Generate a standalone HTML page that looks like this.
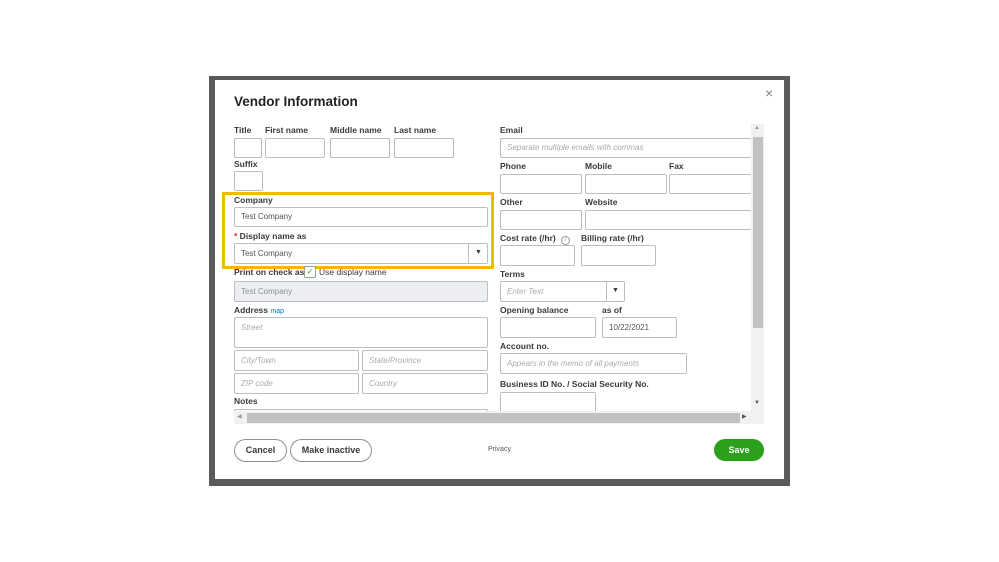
<!DOCTYPE html>
<html><head><meta charset="utf-8"><style>
*{box-sizing:border-box;margin:0;padding:0}
body{width:999px;height:562px;background:#fff;position:relative;overflow:hidden;font-family:"Liberation Sans",sans-serif;color:#393a3d}
.a{position:absolute}
.frame{left:209px;top:76px;width:581px;height:410px;background:#5a5a5a}
.dlg{left:215px;top:80px;width:569px;height:399px;background:#fff}
.l{position:absolute;font-size:8.5px;font-weight:bold;color:#393a3d;white-space:nowrap}
.i{position:absolute;border:1px solid #babec5;border-radius:2px;background:#fff;font-size:8px;color:#555;padding-left:6px;white-space:nowrap;overflow:hidden}
.ph{color:#aaa;font-style:italic}
.btn{position:absolute;border:1px solid #8d9096;border-radius:12px;font-size:9px;font-weight:bold;text-align:center;line-height:21px;background:#fff;color:#393a3d}
</style></head><body>
<div class="a frame"></div>
<div class="a dlg"></div>
<div class="a" style="left:234px;top:94px;font-size:13.5px;font-weight:bold;color:#222">Vendor Information</div>
<div class="a" style="left:765px;top:85px;font-size:14px;color:#888">×</div>

<div class="l" style="left:234px;top:125px">Title</div>
<div class="l" style="left:265px;top:125px">First name</div>
<div class="l" style="left:330px;top:125px">Middle name</div>
<div class="l" style="left:394px;top:125px">Last name</div>
<div class="i" style="left:234px;top:138px;width:28px;height:20px"></div>
<div class="i" style="left:265px;top:138px;width:60px;height:20px"></div>
<div class="i" style="left:330px;top:138px;width:60px;height:20px"></div>
<div class="i" style="left:394px;top:138px;width:60px;height:20px"></div>
<div class="l" style="left:234px;top:159px">Suffix</div>
<div class="i" style="left:234px;top:171px;width:29px;height:20px"></div>

<div class="a" style="left:222px;top:192px;width:272px;height:77px;border:3px solid #f5b800"></div>
<div class="l" style="left:234px;top:195px">Company</div>
<div class="i" style="left:234px;top:207px;width:254px;height:20px;line-height:18px">Test Company</div>
<div class="l" style="left:234px;top:231px"><span style="color:#d52b1e">*</span> Display name as</div>
<div class="i" style="left:234px;top:243px;width:254px;height:21px;line-height:19px">Test Company</div>
<div class="a" style="left:468px;top:244px;width:1px;height:19px;background:#babec5"></div>
<div class="a" style="left:475px;top:249px;font-size:7px">▼</div>
<div class="l" style="left:234px;top:267px">Print on check as</div>
<div class="a" style="left:304px;top:266px;width:12px;height:12px;border:1px solid #999;border-radius:2px;font-size:8px;color:#2ca01c;text-align:center;line-height:10px;background:#fff">✓</div>
<div class="a" style="left:319px;top:267px;font-size:8.5px;color:#393a3d">Use display name</div>
<div class="i" style="left:234px;top:281px;width:254px;height:21px;line-height:19px;background:#eceef1;color:#8d9096">Test Company</div>
<div class="l" style="left:234px;top:305px">Address <span style="color:#0077c5;font-weight:normal;font-size:7px">map</span></div>
<div class="i ph" style="left:234px;top:317px;width:254px;height:31px;padding-top:5px">Street</div>
<div class="i ph" style="left:234px;top:350px;width:125px;height:21px;line-height:19px">City/Town</div>
<div class="i ph" style="left:362px;top:350px;width:126px;height:21px;line-height:19px">State/Province</div>
<div class="i ph" style="left:234px;top:373px;width:125px;height:21px;line-height:19px">ZIP code</div>
<div class="i ph" style="left:362px;top:373px;width:126px;height:21px;line-height:19px">Country</div>
<div class="l" style="left:234px;top:396px">Notes</div>
<div class="i" style="left:234px;top:409px;width:254px;height:4px"></div>

<div class="l" style="left:500px;top:125px">Email</div>
<div class="i ph" style="left:500px;top:138px;width:252px;height:20px;line-height:18px">Separate multiple emails with commas</div>
<div class="l" style="left:500px;top:161px">Phone</div>
<div class="l" style="left:585px;top:161px">Mobile</div>
<div class="l" style="left:669px;top:161px">Fax</div>
<div class="i" style="left:500px;top:174px;width:82px;height:20px"></div>
<div class="i" style="left:585px;top:174px;width:82px;height:20px"></div>
<div class="i" style="left:669px;top:174px;width:83px;height:20px"></div>
<div class="l" style="left:500px;top:197px">Other</div>
<div class="l" style="left:585px;top:197px">Website</div>
<div class="i" style="left:500px;top:210px;width:82px;height:20px"></div>
<div class="i" style="left:585px;top:210px;width:167px;height:20px"></div>
<div class="l" style="left:500px;top:233px">Cost rate (/hr) <span style="display:inline-block;width:9px;height:9px;border:1px solid #999;border-radius:50%;font-size:6px;font-weight:normal;text-align:center;line-height:7px;color:#999;margin-left:3px">i</span></div>
<div class="l" style="left:581px;top:233px">Billing rate (/hr)</div>
<div class="i" style="left:500px;top:245px;width:75px;height:21px"></div>
<div class="i" style="left:581px;top:245px;width:75px;height:21px"></div>
<div class="l" style="left:500px;top:269px">Terms</div>
<div class="i ph" style="left:500px;top:281px;width:125px;height:21px;line-height:19px">Enter Text</div>
<div class="a" style="left:606px;top:282px;width:1px;height:19px;background:#babec5"></div>
<div class="a" style="left:612px;top:287px;font-size:7px">▼</div>
<div class="l" style="left:500px;top:305px">Opening balance</div>
<div class="l" style="left:602px;top:305px">as of</div>
<div class="i" style="left:500px;top:317px;width:96px;height:21px"></div>
<div class="i" style="left:602px;top:317px;width:75px;height:21px;line-height:19px">10/22/2021</div>
<div class="l" style="left:500px;top:341px">Account no.</div>
<div class="i ph" style="left:500px;top:353px;width:187px;height:21px;line-height:19px">Appears in the memo of all payments</div>
<div class="l" style="left:500px;top:379px">Business ID No. / Social Security No.</div>
<div class="i" style="left:500px;top:392px;width:96px;height:20px"></div>

<div class="a" style="left:751px;top:124px;width:13px;height:287px;background:#f1f1f1"></div>
<div class="a" style="left:753px;top:137px;width:10px;height:191px;background:#c1c1c1"></div>
<div class="a" style="left:754px;top:125px;font-size:6px;color:#999">▲</div>
<div class="a" style="left:754px;top:400px;font-size:6px;color:#555">▼</div>
<div class="a" style="left:234px;top:411px;width:530px;height:13px;background:#f1f1f1"></div>
<div class="a" style="left:247px;top:413px;width:493px;height:10px;background:#c1c1c1"></div>
<div class="a" style="left:237px;top:413px;font-size:6px;color:#999">◀</div>
<div class="a" style="left:742px;top:413px;font-size:6px;color:#555">▶</div>

<div class="btn" style="left:234px;top:439px;width:53px;height:23px">Cancel</div>
<div class="btn" style="left:290px;top:439px;width:82px;height:23px">Make inactive</div>
<div class="a" style="left:488px;top:446px;font-size:7px;color:#555">Privacy</div>
<div class="btn" style="left:714px;top:439px;width:50px;height:22px;background:#2ca01c;border-color:#2ca01c;color:#fff">Save</div>
</body></html>
